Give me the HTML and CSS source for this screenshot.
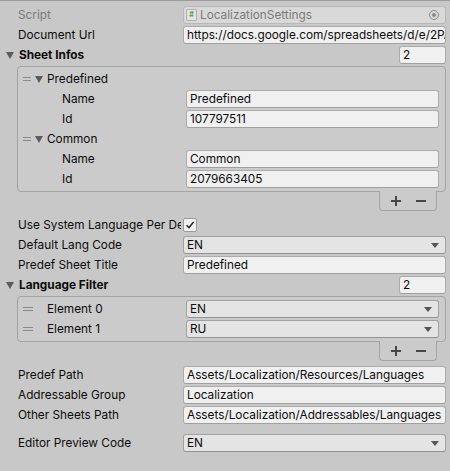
FILE: index.html
```html
<!DOCTYPE html>
<html lang="en">
<head>
    <meta charset="UTF-8">
    <meta name="viewport" content="width=device-width, initial-scale=1.0">
    <title>LocalizationSettings</title>
    <link rel="stylesheet" href="styles.css">
</head>
<body>
    <div class="inspector">
        <div class="row">
            <span class="label disabled">Script</span>
            <div class="field object">
                <span class="script-icon">#</span>
                <span class="value">LocalizationSettings</span>
                <span class="picker"><span class="picker-dot"></span></span>
            </div>
        </div>
        <div class="row">
            <span class="label">Document Url</span>
            <div class="field">https://docs.google.com/spreadsheets/d/e/2PACX-1vRTaYdx</div>
        </div>
        <div class="row foldout">
            <span class="arrow"></span>
            <span class="title">Sheet Infos</span>
            <div class="field count">2</div>
        </div>
        <div class="list">
            <div class="row header">
                <span class="handle"></span>
                <span class="arrow"></span>
                <span>Predefined</span>
            </div>
            <div class="row inner">
                <span class="label">Name</span>
                <div class="field">Predefined</div>
            </div>
            <div class="row inner">
                <span class="label">Id</span>
                <div class="field">107797511</div>
            </div>
            <div class="row header">
                <span class="handle"></span>
                <span class="arrow"></span>
                <span>Common</span>
            </div>
            <div class="row inner">
                <span class="label">Name</span>
                <div class="field">Common</div>
            </div>
            <div class="row inner">
                <span class="label">Id</span>
                <div class="field">2079663405</div>
            </div>
        </div>
        <div class="list-footer">
            <div class="footer-tab">
                <svg width="10" height="10" viewBox="0 0 10 10"><path d="M0 5H10M5 0V10" stroke="#474747" stroke-width="2"/></svg>
                <svg width="10" height="10" viewBox="0 0 10 10"><path d="M0 5H10" stroke="#474747" stroke-width="2"/></svg>
            </div>
        </div>
        <div class="row after-list">
            <span class="label">Use System Language Per Device</span>
            <span class="toggle">
                <svg width="12" height="12" viewBox="0 0 12 12"><path d="M2.5 6.2L5 8.6L9.6 3" fill="none" stroke="#2a2a2a" stroke-width="1.5"/></svg>
            </span>
        </div>
        <div class="row">
            <span class="label">Default Lang Code</span>
            <div class="field dropdown">EN<span class="caret"></span></div>
        </div>
        <div class="row">
            <span class="label">Predef Sheet Title</span>
            <div class="field">Predefined</div>
        </div>
        <div class="row foldout">
            <span class="arrow"></span>
            <span class="title">Language Filter</span>
            <div class="field count">2</div>
        </div>
        <div class="list">
            <div class="row element">
                <span class="handle wide"></span>
                <span class="label">Element 0</span>
                <div class="field dropdown">EN<span class="caret"></span></div>
            </div>
            <div class="row element">
                <span class="handle wide"></span>
                <span class="label">Element 1</span>
                <div class="field dropdown">RU<span class="caret"></span></div>
            </div>
        </div>
        <div class="list-footer">
            <div class="footer-tab">
                <svg width="10" height="10" viewBox="0 0 10 10"><path d="M0 5H10M5 0V10" stroke="#474747" stroke-width="2"/></svg>
                <svg width="10" height="10" viewBox="0 0 10 10"><path d="M0 5H10" stroke="#474747" stroke-width="2"/></svg>
            </div>
        </div>
        <div class="row after-list">
            <span class="label">Predef Path</span>
            <div class="field">Assets/Localization/Resources/Languages</div>
        </div>
        <div class="row">
            <span class="label">Addressable Group</span>
            <div class="field">Localization</div>
        </div>
        <div class="row">
            <span class="label">Other Sheets Path</span>
            <div class="field">Assets/Localization/Addressables/Languages</div>
        </div>
        <div class="row spaced">
            <span class="label">Editor Preview Code</span>
            <div class="field dropdown">EN<span class="caret"></span></div>
        </div>
    </div>
</body>
</html>
```

FILE: styles.css
```css
body {
    margin: 0;
    background-color: #c8c8c8;
    font-family: Inter, "Noto Sans", sans-serif;
    font-size: 11.8px;
    color: #0c0c0c;
}

.inspector {
    border-top: 1px solid #9c9c9c;
    padding: 5px 4px 0 0;
}

.row {
    display: flex;
    align-items: center;
    height: 18px;
    margin-bottom: 2px;
    padding-left: 18px;
    line-height: 18px;
    white-space: nowrap;
}

.label {
    flex: none;
    width: 163px;
    margin-right: 2px;
    overflow: hidden;
}

.disabled {
    color: #7b7b7b;
}

.field {
    flex: 1;
    min-width: 0;
    height: 18px;
    box-sizing: border-box;
    display: flex;
    align-items: center;
    padding: 0 3px;
    border: 1px solid #acacac;
    border-bottom-color: #a0a0a0;
    border-radius: 3px;
    background-color: #f0f0f0;
    line-height: 16px;
    overflow: hidden;
}

.field.object {
    padding-left: 2px;
    background-color: #d9d9d9;
    border-color: #b8b8b8;
    color: #7b7b7b;
}

.script-icon {
    flex: none;
    width: 9px;
    height: 10px;
    margin-right: 3px;
    border: 1px solid #b0b0b0;
    border-radius: 1px;
    background-color: #e4e4e4;
    color: #5b9a4a;
    font-size: 7px;
    font-weight: bold;
    line-height: 10px;
    text-align: center;
}

.field.object .value {
    flex: 1;
}

.picker {
    flex: none;
    width: 8px;
    height: 8px;
    margin-right: 3px;
    border: 1px solid #8c8c8c;
    border-radius: 50%;
    display: flex;
    align-items: center;
    justify-content: center;
}

.picker-dot {
    width: 4px;
    height: 4px;
    border-radius: 50%;
    background-color: #8c8c8c;
}

.field.dropdown {
    justify-content: space-between;
    background-color: #e4e4e4;
    border-color: #a2a2a2;
    border-bottom-color: #939393;
    padding-right: 6px;
}

.caret {
    width: 0;
    height: 0;
    border-left: 4px solid transparent;
    border-right: 4px solid transparent;
    border-top: 5px solid #555555;
}

.foldout {
    padding-left: 6px;
}

.arrow {
    flex: none;
    width: 0;
    height: 0;
    margin-right: 5px;
    border-left: 4px solid transparent;
    border-right: 4px solid transparent;
    border-top: 7px solid #5c5c5c;
}

.title {
    flex: 1;
    font-weight: bold;
}

.field.count {
    flex: none;
    width: 47px;
}

.list {
    margin-left: 17px;
    padding: 3px 6px 1px 0;
    border: 1px solid #a4a4a4;
    border-radius: 4px;
    background-color: #cbcbcb;
}

.header {
    padding-left: 5px;
}

.header .arrow {
    margin-right: 4px;
}

.handle {
    flex: none;
    width: 8px;
    height: 2px;
    margin-right: 4px;
    border-top: 1px solid #8a8a8a;
    border-bottom: 1px solid #8a8a8a;
}

.handle.wide {
    width: 10px;
    margin-right: 14px;
}

.inner {
    padding-left: 44px;
}

.inner .label {
    width: 122px;
}

.element {
    padding-left: 5px;
}

.element .label {
    width: 137px;
}

.list-footer {
    display: flex;
    justify-content: flex-end;
    padding-right: 9px;
}

.footer-tab {
    width: 58px;
    height: 20px;
    margin-top: -1px;
    box-sizing: border-box;
    display: flex;
    align-items: center;
    justify-content: center;
    gap: 15px;
    border: 1px solid #a4a4a4;
    border-top: none;
    border-radius: 0 0 4px 4px;
    background-color: #cbcbcb;
}

.after-list {
    margin-top: 5px;
}

.toggle {
    flex: none;
    width: 14px;
    height: 14px;
    box-sizing: border-box;
    display: flex;
    align-items: center;
    justify-content: center;
    border: 1px solid #9a9a9a;
    border-radius: 2px;
    background-color: #f0f0f0;
}

.spaced {
    margin-top: 10px;
}
```
